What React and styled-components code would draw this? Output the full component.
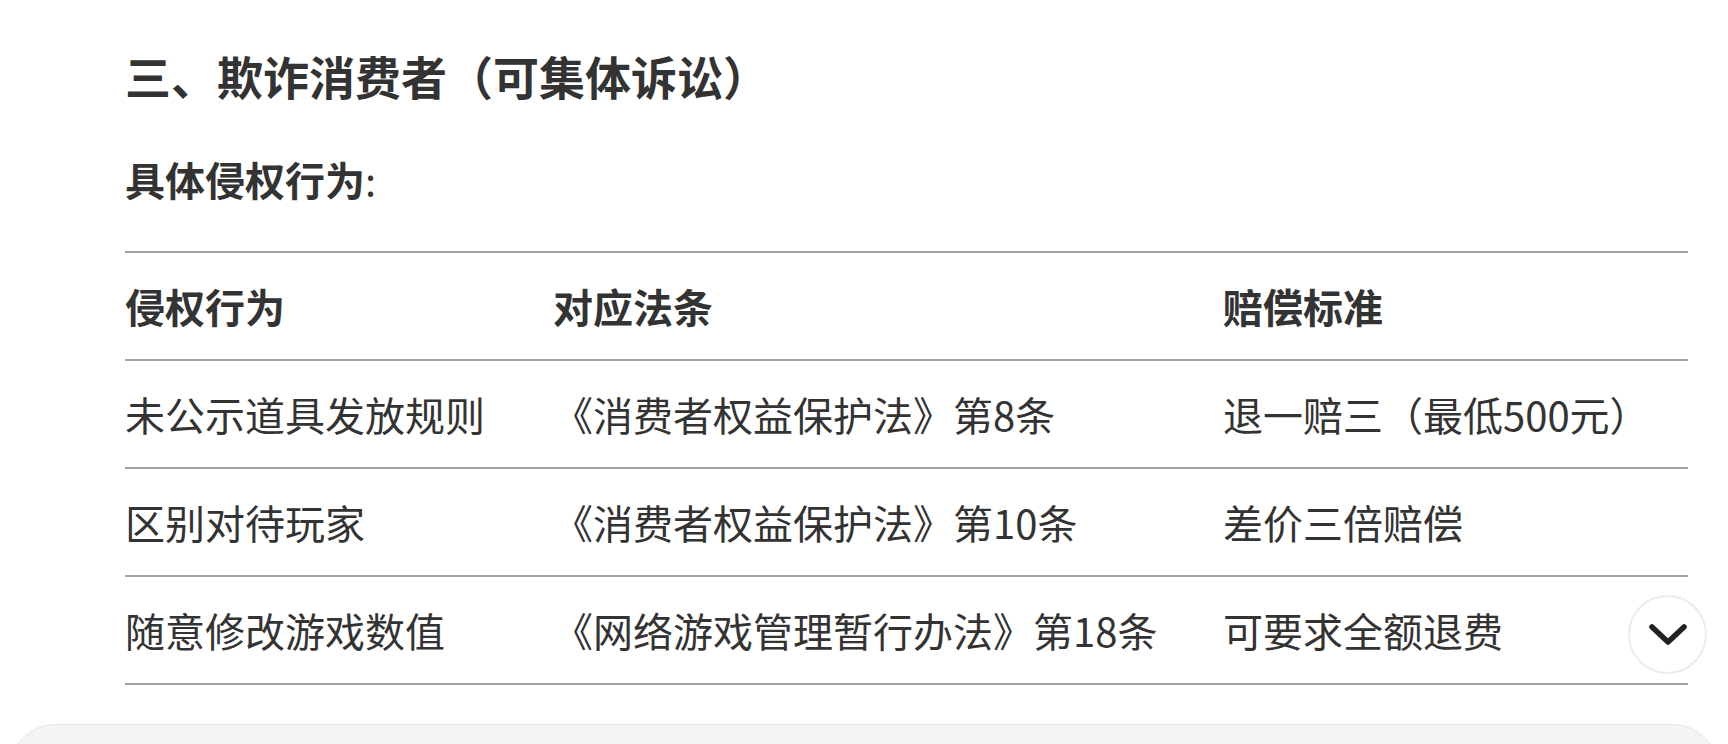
import React from 'react'
import styled, { createGlobalStyle } from 'styled-components';

const GlobalStyle = createGlobalStyle`
    html, body {
        margin: 0;
        padding: 0;
        background: #ffffff;
        overflow: hidden;
    }
    body {
        font-family: "Noto Sans CJK SC", "Noto Sans", sans-serif;
        color: #333333;
    }
`;

export const Page = styled.div`
    position: relative;
    width: 1728px;
    min-height: 744px;
`;

export const Article = styled.div`
    padding: 45px 40px 0 125px;
`;

export const Title = styled.h3`
    margin: 0;
    font-size: 46px;
    line-height: 60px;
    font-weight: 700;
    color: #333333;
`;

export const SubHeading = styled.p`
    margin: 44px 0 0;
    font-size: 40px;
    line-height: 60px;
    color: #333333;

    strong {
        font-weight: 700;
    }
`;

export const Table = styled.div`
    margin-top: 42px;
    border-top: 2px solid #a3a3a3;
`;

export const Row = styled.div`
    display: grid;
    grid-template-columns: 428px 670px 1fr;
    align-items: center;
    height: 106px;
    border-bottom: 2px solid #a3a3a3;
    font-size: 40px;
    font-weight: ${({ $head }) => ($head ? 700 : 400)};
    color: #333333;
    white-space: nowrap;
`;

export const Cell = styled.div`
    line-height: 56px;
`;

export const Composer = styled.div`
    margin: 39px 8px 0;
    height: 200px;
    background: #f3f4f6;
    border: 1px solid #e2e3e6;
    border-radius: 48px;
`;

export const ScrollButton = styled.button`
    position: absolute;
    left: 1628px;
    top: 595px;
    width: 79px;
    height: 79px;
    border-radius: 50%;
    border: 2px solid #ececec;
    background: #ffffff;
    display: flex;
    align-items: center;
    justify-content: center;
    padding: 0;
    cursor: pointer;
`;

const rows = [
    ['未公示道具发放规则', '《消费者权益保护法》第8条', '退一赔三（最低500元）'],
    ['区别对待玩家', '《消费者权益保护法》第10条', '差价三倍赔偿'],
    ['随意修改游戏数值', '《网络游戏管理暂行办法》第18条', '可要求全额退费'],
];

const App = () => {

    return (
        <Page>
            <GlobalStyle />
            <Article>
                <Title>三、欺诈消费者（可集体诉讼）</Title>
                <SubHeading><strong>具体侵权行为</strong>:</SubHeading>

                <Table>
                    <Row $head>
                        <Cell>侵权行为</Cell>
                        <Cell>对应法条</Cell>
                        <Cell>赔偿标准</Cell>
                    </Row>
                    {rows.map((r) => (
                        <Row key={r[0]}>
                            <Cell>{r[0]}</Cell>
                            <Cell>{r[1]}</Cell>
                            <Cell>{r[2]}</Cell>
                        </Row>
                    ))}
                </Table>
            </Article>

            <Composer />

            <ScrollButton aria-label="scroll down">
                <svg width="40" height="24" viewBox="0 0 40 24" fill="none">
                    <path d="M4 4 L20 19 L36 4" stroke="#222" strokeWidth="5.5" strokeLinecap="round" strokeLinejoin="round" />
                </svg>
            </ScrollButton>
        </Page>
    )
}
export default App
